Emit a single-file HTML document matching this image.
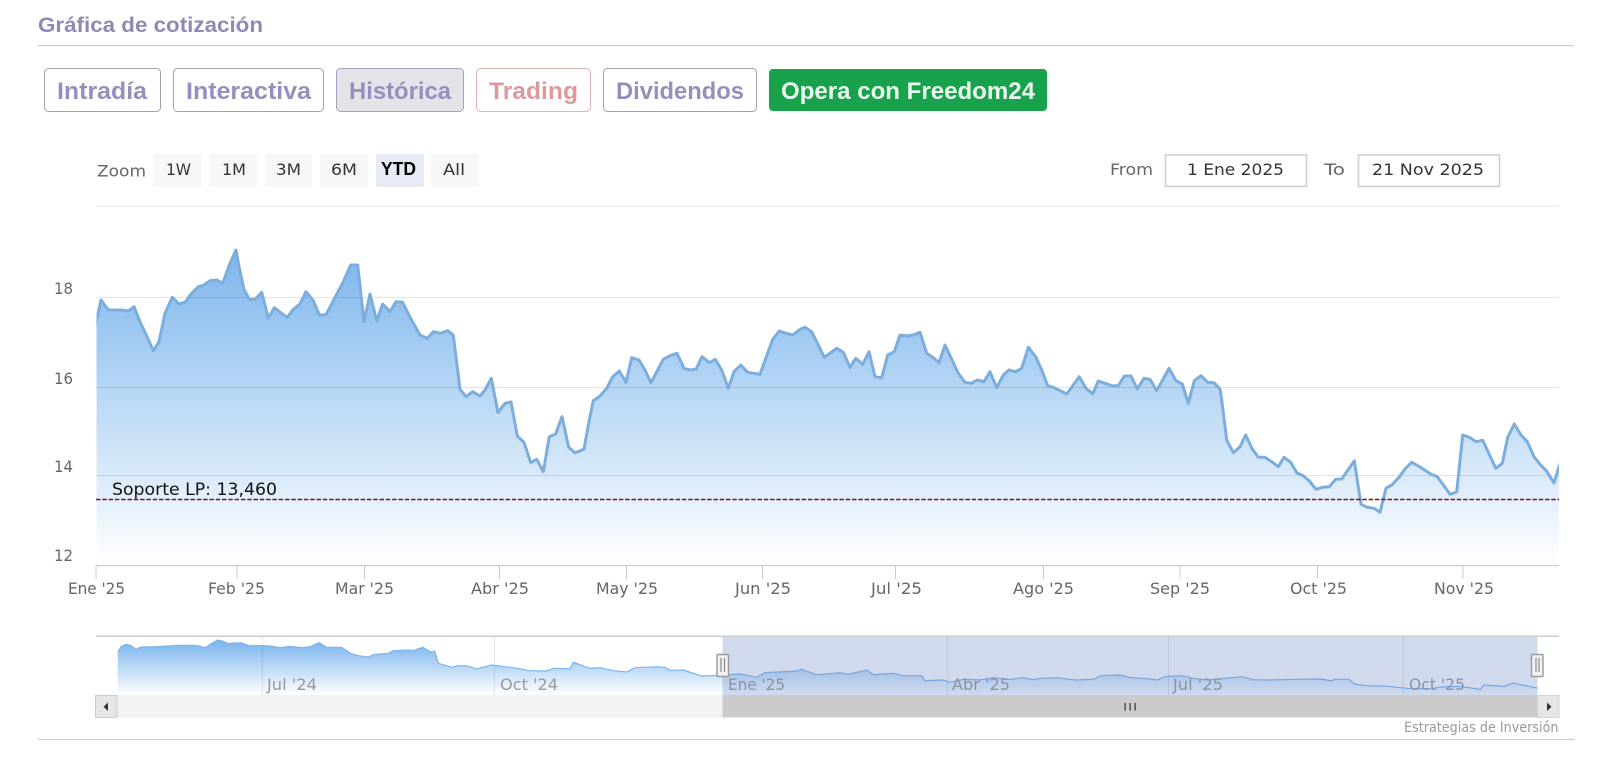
<!DOCTYPE html>
<html lang="es">
<head>
<meta charset="utf-8">
<title>Gráfica de cotización</title>
<style>
html,body{margin:0;padding:0;background:#fff;width:1597px;height:764px;overflow:hidden}
svg{display:block}
.h{font-family:"Liberation Sans",sans-serif;font-weight:700}
.c{font-family:"DejaVu Sans",sans-serif;font-size:16px}
</style>
</head>
<body>
<svg width="1597" height="764" viewBox="0 0 1597 764" xmlns="http://www.w3.org/2000/svg">
<defs>
<linearGradient id="g" x1="0" y1="250" x2="0" y2="565" gradientUnits="userSpaceOnUse"><stop offset="0" stop-color="#7cb5ec"/><stop offset="1" stop-color="#fff"/></linearGradient>
<linearGradient id="n" x1="0" y1="642" x2="0" y2="695" gradientUnits="userSpaceOnUse"><stop offset="0" stop-color="#7cb5ec"/><stop offset="1" stop-color="#fff"/></linearGradient>
<clipPath id="cl"><rect x="96.5" y="200" width="1462.5" height="365"/></clipPath>
<clipPath id="cn"><rect x="117.7" y="637" width="1419.8" height="58"/></clipPath>
<path id="L" d="M80 400L96.7 320L101 300L108.3 310L121.7 310L128.3 311L134 306.7L140 321.7L146.7 336L153.3 350.7L159 341.7L165 313.3L172.3 297.3L179 304L185 302.3L191.7 293.3L198.3 286.7L203.3 285.3L210 280.7L216.7 280L222.7 283.3L229.3 265L236 250L239 266.7L244 289.3L249.3 299.3L255 299.3L261.7 292.3L268.3 318.3L274.3 307.7L280.7 312.7L287.3 317.3L293.3 309.3L300 304L306 291.7L313.3 300.7L319.3 315L326 314.7L333.3 300.7L343.3 281.7L350.7 265L357.7 265L364 321.7L370 294L376.7 320.7L382.7 304L390 311.7L396 301.7L402.7 302.3L410 317.3L420 335L427.3 338.3L433.3 331.7L440.7 333.3L447.7 330.7L453.3 335L460 389.3L466 396.7L472.7 391.7L480 396L485 390L491.3 378.3L498 412.7L505 403.3L511 402L517.3 436L524 442.3L530.7 462.7L536.7 459.3L543.3 471.7L549.3 436.7L555.7 434L562 416.7L568.7 447.3L575 452.7L580 451L584 449L589.3 420L593.3 400.7L600 396L606.7 388.3L612.7 376.7L619.3 371L626 382.3L631.7 357.7L639 360L645 370L651 382.7L663.3 359.3L670 355.7L677 353.3L684 368.3L690 370L696 369.3L702 356.7L709.3 362.7L715.3 359.3L721.7 370L728.3 388.3L734 371.7L740.7 365L747.7 372.3L760 374.3L772.7 339.3L779.3 331L786 333.3L792.7 335L799 330L805 327.3L811.7 331.7L824.3 357.3L836.7 348.3L843.3 352.3L850 367.3L855.7 358.3L862.7 364.3L869 351.7L875 376.7L881.7 377.7L887.7 355L894.3 351.7L900 335L907.3 336L913.3 335L920 332.3L926.7 353.3L933.3 357.7L939 362.7L945 345L958.3 373.3L965 382.3L971 383.3L977.3 380L984 381.7L990 371.7L996.7 387.7L1003.3 375L1009 370L1015.7 371.7L1021.7 368.3L1028.3 347.3L1035.7 356.7L1041.7 370L1047.7 385.7L1054.3 387.7L1066.7 394L1079.3 376.7L1086 388.3L1092.7 394L1098.3 381L1105 383.3L1111.7 385.7L1118.3 385.7L1124.3 376L1131 376L1137.3 389L1144 378.3L1150 379.3L1156.7 390.7L1169 368.3L1176 380.7L1182.3 384L1188.3 403.3L1194.3 380.7L1201 375.7L1207.7 382.3L1214 382.7L1220 389L1221.7 400L1226.7 440L1233.3 452.7L1240 446.7L1245.7 435L1252.3 449L1258.3 457.3L1265 457.3L1271.7 461.7L1278.3 466.7L1284 457.3L1290.7 462.3L1296.7 472.7L1303.3 475.7L1309.3 481L1316 489.3L1322.7 487.3L1329.3 486.7L1335.7 479.3L1341.7 479L1354.3 461L1361 504.3L1367.3 507.3L1374 508.3L1380 512.3L1386 488.3L1392.7 484.3L1399 477.3L1405 469L1411.7 462.3L1418.3 466L1430.7 474L1437.3 476.7L1450 494.3L1456.7 492L1462.7 435L1469.3 437.3L1476 441.7L1482.7 440.3L1495.7 468.3L1502.3 463.3L1507.7 437.3L1514.3 424L1521 435L1527.3 441.7L1534 456.7L1540 464.3L1547 471.6L1554 483L1558.5 468.5L1572 430L1572 580L80 580Z"/>
<path id="N" d="M105 680L117.7 651.7L121.7 646L126.7 644.3L131.7 646L136 649.3L141 647L156.7 646.7L178.3 645.3L193.3 645.3L198 645.7L205 647.7L211.7 643.3L217.7 640L223.3 641.3L228.3 643.7L233.3 643L241.7 643L250 646L253.3 645.3L270 646L280 647.7L290 646.3L301.7 647.7L310 646.7L319.3 642.7L326.7 647.3L341.7 647.3L351.7 654L358.3 655.7L368.3 657L373.3 654.7L388.3 653.3L393.3 650.7L408.3 650L413.3 650.7L422.7 647.3L430 651.7L434.7 651.3L438.3 663.3L451.7 667.3L458.3 665.7L466.7 665.7L476.7 669L491.7 665L510 667.3L520 668.7L530 670.7L546.7 671L553.3 668.3L570 668.7L573.3 662.3L590 668.3L600 667.7L613.3 670.7L626.7 672L635 667.7L656.7 666.7L665 667.3L670 670.3L683.3 670L701.7 676L720 675.3L740 674L756.7 677.3L765 672.7L796.7 671L801 669.3L816.7 674.7L840 672.7L848.3 674.3L866.7 670L873.3 674.7L893.3 673.3L903.3 675.7L921.7 675.7L925 680.7L943.3 680L950 682.3L963.3 679.3L980 680L993.3 677.7L1010 679.3L1023.3 677.7L1033.3 679.7L1040 678.3L1057.8 677.7L1075.5 680L1093.3 679.3L1100.4 675.7L1120 675L1128.8 677.3L1150 679L1157.2 680L1164.3 676.7L1182 675.7L1192.8 678.3L1207 680L1242.5 676.7L1253 679.7L1267.4 680L1295.8 679.3L1320.6 679L1331.3 680.7L1335 679.3L1349 679.3L1354.4 684L1366.8 685.7L1388 686.3L1409.5 688.7L1430.8 688.7L1441.4 687L1459 686.3L1480.5 689.3L1484 685L1500 686L1503.6 686.7L1512.5 683L1535.6 687.7L1537.3 688L1550 691L1550 705L105 705Z"/>
</defs>

<rect width="1597" height="764" fill="#fff"/>

<!-- Heading -->
<text x="38" y="32" class="h" font-size="21" fill="#8e8ab5" textLength="225" lengthAdjust="spacingAndGlyphs">Gráfica de cotización</text>
<rect x="38" y="45" width="1536" height="1" fill="#c9c9c9"/>

<!-- Tabs -->
<g class="h" font-size="24">
<rect x="44.5" y="68.5" width="116" height="43" rx="4" fill="#fff" stroke="#a3a0b0"/>
<text x="57" y="99" fill="#9490bd" textLength="90" lengthAdjust="spacingAndGlyphs">Intradía</text>
<rect x="173.5" y="68.5" width="150" height="43" rx="4" fill="#fff" stroke="#a3a0b0"/>
<text x="186" y="99" fill="#9490bd" textLength="125" lengthAdjust="spacingAndGlyphs">Interactiva</text>
<rect x="336.5" y="68.5" width="127" height="43" rx="4" fill="#e4e4e8" stroke="#a3a0bb"/>
<text x="349" y="99" fill="#9490bd" textLength="102" lengthAdjust="spacingAndGlyphs">Histórica</text>
<rect x="476.5" y="68.5" width="114" height="43" rx="4" fill="#fff" stroke="#e0b4b4"/>
<text x="489" y="99" fill="#dd9a9e" textLength="89" lengthAdjust="spacingAndGlyphs">Trading</text>
<rect x="603.5" y="68.5" width="153" height="43" rx="4" fill="#fff" stroke="#a3a0b0"/>
<text x="616" y="99" fill="#9490bd" textLength="128" lengthAdjust="spacingAndGlyphs">Dividendos</text>
<rect x="769" y="69" width="278" height="42" rx="4" fill="#18a24c"/>
<text x="781" y="99" fill="#e8fbee" textLength="254" lengthAdjust="spacingAndGlyphs">Opera con Freedom24</text>
</g>

<!-- Range selector -->
<g class="c">
<text x="97" y="176.5" fill="#666" textLength="49" lengthAdjust="spacingAndGlyphs">Zoom</text>
<g fill="#f7f7f7">
<rect x="153" y="154" width="49" height="33" rx="2"/>
<rect x="209" y="154" width="48" height="33" rx="2"/>
<rect x="265" y="154" width="47" height="33" rx="2"/>
<rect x="320" y="154" width="48" height="33" rx="2"/>
<rect x="431" y="154" width="48" height="33" rx="2"/>
</g>
<rect x="376" y="154" width="48" height="33" rx="2" fill="#e6ebf5"/>
<g fill="#333">
<text x="166" y="175" textLength="25" lengthAdjust="spacingAndGlyphs">1W</text>
<text x="222" y="175" textLength="24" lengthAdjust="spacingAndGlyphs">1M</text>
<text x="276" y="175" textLength="25" lengthAdjust="spacingAndGlyphs">3M</text>
<text x="331" y="175" textLength="26" lengthAdjust="spacingAndGlyphs">6M</text>
<text x="443" y="175" textLength="22" lengthAdjust="spacingAndGlyphs">All</text>
</g>
<text x="381" y="175" fill="#000" font-family="Liberation Sans, sans-serif" font-weight="700" font-size="18" textLength="35" lengthAdjust="spacingAndGlyphs">YTD</text>

<text x="1110" y="175" fill="#666" textLength="43" lengthAdjust="spacingAndGlyphs">From</text>
<rect x="1165.5" y="155" width="141" height="31.5" fill="#fff" stroke="#cfcfcf" stroke-width="1.6"/>
<text x="1187" y="175" fill="#333" textLength="97" lengthAdjust="spacingAndGlyphs">1 Ene 2025</text>
<text x="1324" y="175" fill="#666" textLength="21" lengthAdjust="spacingAndGlyphs">To</text>
<rect x="1358.5" y="155" width="141" height="31.5" fill="#fff" stroke="#cfcfcf" stroke-width="1.6"/>
<text x="1372" y="175" fill="#333" textLength="112" lengthAdjust="spacingAndGlyphs">21 Nov 2025</text>
</g>

<!-- Main plot -->
<use href="#L" fill="url(#g)" clip-path="url(#cl)"/>
<g fill="#000" opacity=".11">
<rect x="96" y="297" width="1463" height="1"/>
<rect x="96" y="387" width="1463" height="1"/>
<rect x="96" y="475" width="1463" height="1"/>
</g>
<rect x="96" y="205.5" width="1463" height="1" fill="#e6e6e6"/>
<use href="#L" fill="none" stroke="#7caedd" stroke-width="3" stroke-linejoin="round" clip-path="url(#cl)"/>

<text x="112" y="495" font-family="DejaVu Sans, sans-serif" font-size="17" fill="#111" textLength="165" lengthAdjust="spacingAndGlyphs">Soporte LP: 13,460</text>
<line x1="96" y1="499.5" x2="1559" y2="499.5" stroke="#6e1533" stroke-width="1.6" stroke-dasharray="4.5 1.8"/>

<g class="c" fill="#666">
<text x="54" y="294" textLength="19" lengthAdjust="spacingAndGlyphs">18</text>
<text x="54" y="384" textLength="19" lengthAdjust="spacingAndGlyphs">16</text>
<text x="54" y="472" textLength="19" lengthAdjust="spacingAndGlyphs">14</text>
<text x="54" y="561" textLength="19" lengthAdjust="spacingAndGlyphs">12</text>
</g>

<!-- X axis -->
<rect x="96" y="565" width="1463" height="1.2" fill="#ccc"/>
<g fill="#ccc">
<rect x="95.5" y="565" width="1" height="14"/>
<rect x="236.5" y="565" width="1" height="14"/>
<rect x="364" y="565" width="1" height="14"/>
<rect x="499" y="565" width="1" height="14"/>
<rect x="626" y="565" width="1" height="14"/>
<rect x="762" y="565" width="1" height="14"/>
<rect x="895" y="565" width="1" height="14"/>
<rect x="1043" y="565" width="1" height="14"/>
<rect x="1179.5" y="565" width="1" height="14"/>
<rect x="1317" y="565" width="1" height="14"/>
<rect x="1462.5" y="565" width="1" height="14"/>
</g>
<g class="c" fill="#666">
<text x="68" y="594" textLength="57" lengthAdjust="spacingAndGlyphs">Ene '25</text>
<text x="208" y="594" textLength="57" lengthAdjust="spacingAndGlyphs">Feb '25</text>
<text x="335" y="594" textLength="59" lengthAdjust="spacingAndGlyphs">Mar '25</text>
<text x="471" y="594" textLength="58" lengthAdjust="spacingAndGlyphs">Abr '25</text>
<text x="596" y="594" textLength="62" lengthAdjust="spacingAndGlyphs">May '25</text>
<text x="735" y="594" textLength="56" lengthAdjust="spacingAndGlyphs">Jun '25</text>
<text x="871" y="594" textLength="51" lengthAdjust="spacingAndGlyphs">Jul '25</text>
<text x="1013" y="594" textLength="61" lengthAdjust="spacingAndGlyphs">Ago '25</text>
<text x="1150" y="594" textLength="60" lengthAdjust="spacingAndGlyphs">Sep '25</text>
<text x="1290" y="594" textLength="57" lengthAdjust="spacingAndGlyphs">Oct '25</text>
<text x="1434" y="594" textLength="60" lengthAdjust="spacingAndGlyphs">Nov '25</text>
</g>

<!-- Navigator -->
<use href="#N" fill="url(#n)" clip-path="url(#cn)"/>
<g fill="#000" opacity=".09">
<rect x="262" y="637" width="1" height="58"/>
<rect x="494" y="637" width="1" height="58"/>
<rect x="947" y="637" width="1" height="58"/>
<rect x="1168" y="637" width="1" height="58"/>
<rect x="1403" y="637" width="1" height="58"/>
</g>
<use href="#N" fill="none" stroke="#7cb5ec" stroke-width="1.2" clip-path="url(#cn)"/>
<g class="c" fill="#999">
<text x="267" y="690" textLength="50" lengthAdjust="spacingAndGlyphs">Jul '24</text>
<text x="500" y="690" textLength="58" lengthAdjust="spacingAndGlyphs">Oct '24</text>
<text x="728" y="690" textLength="57" lengthAdjust="spacingAndGlyphs">Ene '25</text>
<text x="952" y="690" textLength="58" lengthAdjust="spacingAndGlyphs">Abr '25</text>
<text x="1173" y="690" textLength="50" lengthAdjust="spacingAndGlyphs">Jul '25</text>
<text x="1409" y="690" textLength="56" lengthAdjust="spacingAndGlyphs">Oct '25</text>
</g>
<rect x="722.5" y="636" width="815" height="59" fill="#6685c2" fill-opacity=".3"/>
<rect x="96" y="635.5" width="1463" height="1.5" fill="#ccc"/>

<!-- Scrollbar -->
<rect x="96" y="695" width="1463" height="22.5" fill="#f2f2f2"/>
<rect x="722.5" y="695" width="815" height="22.5" fill="#cbcbcb"/>
<rect x="95.5" y="695.5" width="21.5" height="22" fill="#e6e6e6" stroke="#ccc"/>
<rect x="1537.5" y="695.5" width="21.5" height="22" fill="#e6e6e6" stroke="#d4d4d4"/>
<path d="M108 702.5L108 711L103.5 706.7Z" fill="#333"/>
<path d="M1547 702.5L1547 711L1551.5 706.7Z" fill="#333"/>
<g fill="#333">
<rect x="1124.5" y="703" width="1.2" height="7.5"/>
<rect x="1129.5" y="703" width="1.2" height="7.5"/>
<rect x="1134.5" y="703" width="1.2" height="7.5"/>
</g>

<!-- Handles -->
<rect x="717" y="654.5" width="11.5" height="22" rx="1" fill="#f2f2f2" stroke="#999" stroke-width="1.4"/>
<path d="M721 658V672M724.5 658V672" stroke="#888" stroke-width="1.2"/>
<rect x="1531.5" y="654.5" width="11.5" height="22" rx="1" fill="#f2f2f2" stroke="#999" stroke-width="1.4"/>
<path d="M1536 658V672M1539 658V672" stroke="#888" stroke-width="1.2"/>

<!-- Credits -->
<text x="1404" y="732" font-family="DejaVu Sans, sans-serif" font-size="14" fill="#999" textLength="154.5" lengthAdjust="spacingAndGlyphs">Estrategias de Inversión</text>
<rect x="38" y="739" width="1536" height="1" fill="#c9c9c9"/>
</svg>
</body>
</html>
